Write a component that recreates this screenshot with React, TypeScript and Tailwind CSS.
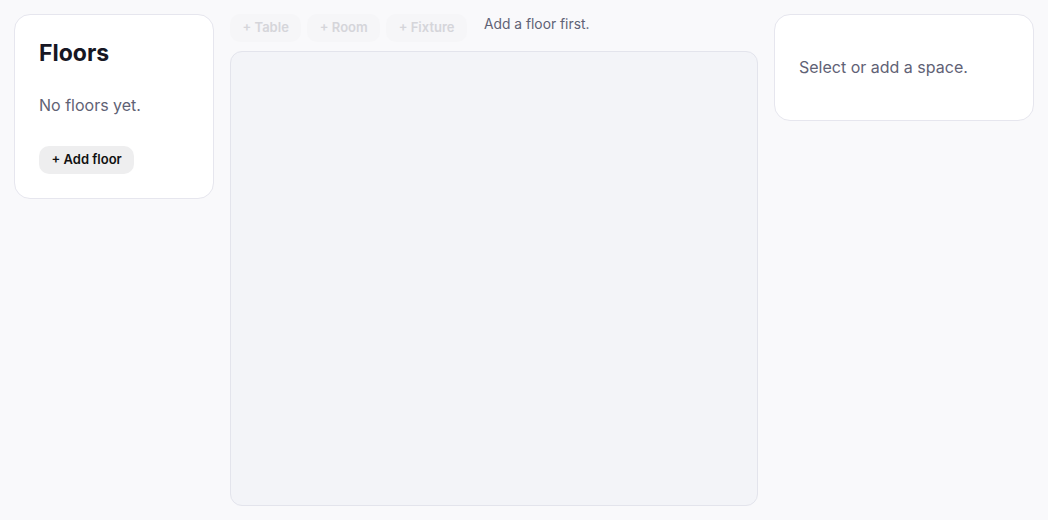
export default function App() {
  return (
    <div className="flex h-[520px] w-full gap-4 bg-[#f9f9fb] p-[14px] font-['Inter',sans-serif] text-[#1c1c28]">
      {/* Floors sidebar */}
      <aside className="flex w-[200px] shrink-0 flex-col items-start self-start rounded-2xl border border-[#e6e6ee] bg-white px-6 pt-[23px] pb-6">
        <h2 className="text-[23px] leading-[30px] font-bold text-[#171724]">Floors</h2>
        <p className="mt-[25px] text-[16px] leading-6 text-[#5f6275]">No floors yet.</p>
        <button className="mt-[29px] h-7 rounded-[10px] bg-[#eeeeef] px-[12.5px] text-[13px] font-semibold text-[#111]">
          + Add floor
        </button>
      </aside>

      {/* Canvas column */}
      <main className="flex min-w-0 flex-1 flex-col gap-[9px]">
        <div className="flex items-start gap-[6px]">
          <button disabled className="h-7 rounded-[10px] bg-[#f6f6f8] px-[12.5px] text-[13px] font-semibold text-[#d5d5da]">
            + Table
          </button>
          <button disabled className="h-7 rounded-[10px] bg-[#f6f6f8] px-[12.5px] text-[13px] font-semibold text-[#d5d5da]">
            + Room
          </button>
          <button disabled className="h-7 rounded-[10px] bg-[#f6f6f8] px-[12.5px] text-[13px] font-semibold text-[#d5d5da]">
            + Fixture
          </button>
          <span className="ml-[11px] text-[13.8px] leading-5 text-[#5f6275]">Add a floor first.</span>
        </div>
        <div className="flex-1 rounded-xl border border-[#e3e4ec] bg-[#f3f4f8]" />
      </main>

      {/* Space details */}
      <aside className="flex h-[107px] w-[260px] shrink-0 items-center self-start rounded-2xl border border-[#e6e6ee] bg-white px-6 pb-[2px]">
        <p className="text-[16px] leading-6 text-[#5f6275]">Select or add a space.</p>
      </aside>
    </div>
  );
}
